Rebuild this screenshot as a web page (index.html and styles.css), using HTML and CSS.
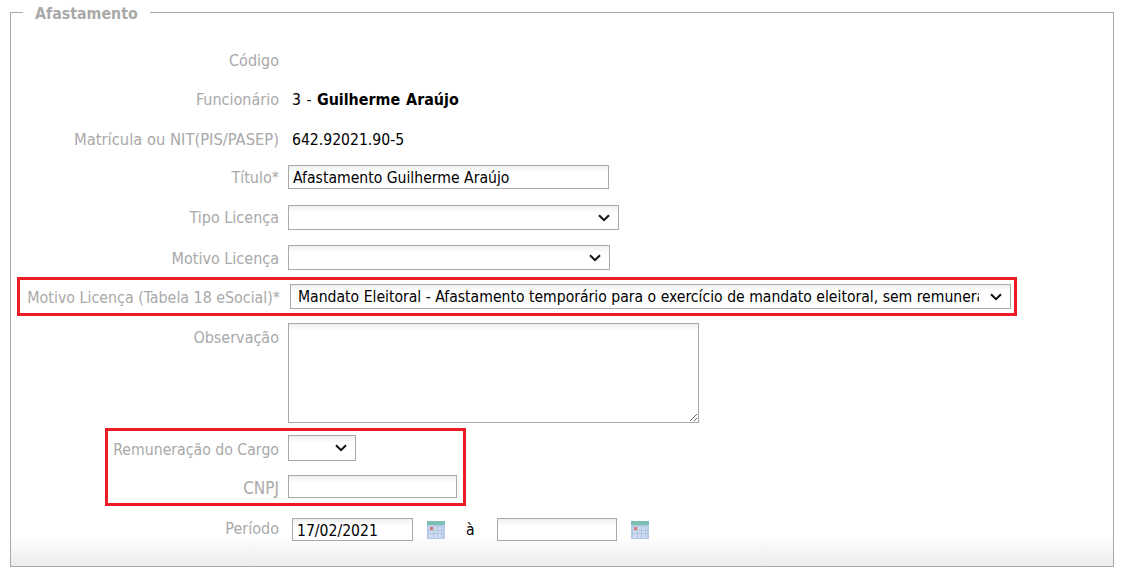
FILE: index.html
```html
<!DOCTYPE html>
<html lang="pt-BR">
<head>
    <meta charset="UTF-8">
    <meta name="viewport" content="width=device-width, initial-scale=1.0">
    <title>Afastamento</title>
    <link rel="stylesheet" href="styles.css">
</head>
<body>
    <fieldset class="panel">
        <legend>Afastamento</legend>

        <div class="row row-codigo">
            <label>Código</label>
        </div>
        <div class="row row-funcionario">
            <label>Funcionário</label>
            <span class="value">3 - <b>Guilherme Araújo</b></span>
        </div>
        <div class="row row-matricula">
            <label>Matrícula ou NIT(PIS/PASEP)</label>
            <span class="value">642.92021.90-5</span>
        </div>
        <div class="row row-titulo">
            <label>Título*</label>
            <input type="text" class="input-titulo" value="Afastamento Guilherme Araújo">
        </div>
        <div class="row row-tipo">
            <label>Tipo Licença</label>
            <select class="select-tipo"><option></option></select>
        </div>
        <div class="row row-motivo">
            <label>Motivo Licença</label>
            <select class="select-motivo"><option></option></select>
        </div>

        <div class="highlight highlight-esocial">
            <label>Motivo Licença (Tabela 18 eSocial)*</label>
            <select class="select-esocial">
                <option>Mandato Eleitoral - Afastamento temporário para o exercício de mandato eleitoral, sem remuneração</option>
            </select>
        </div>

        <div class="row row-obs">
            <label>Observação</label>
            <textarea></textarea>
        </div>

        <div class="highlight highlight-cargo">
            <div class="row row-remuneracao">
                <label>Remuneração do Cargo</label>
                <select class="select-remuneracao"><option></option></select>
            </div>
            <div class="row row-cnpj">
                <label>CNPJ</label>
                <input type="text" class="input-cnpj">
            </div>
        </div>

        <div class="row row-periodo">
            <label>Período</label>
            <input type="text" class="input-data input-inicio" value="17/02/2021">
            <svg class="cal" viewBox="0 0 18 18" width="18" height="18">
                <rect width="18" height="18" fill="#b4cbe8"/>
                <rect width="18" height="4" fill="#7cc0b4"/>
                <rect x="2" y="6" width="14" height="11" fill="#cfdcf0"/>
                <path d="M2 9.5h14M2 12.5h14M6.500 6v11M10.500 6v11M14.500 6v11" stroke="#b4c6e2" stroke-width="1" fill="none"/>
                <rect x="3" y="6" width="3" height="3" fill="#e07a76"/>
            </svg>
            <span class="ate">à</span>
            <input type="text" class="input-data">
            <svg class="cal" viewBox="0 0 18 18" width="18" height="18">
                <rect width="18" height="18" fill="#b4cbe8"/>
                <rect width="18" height="4" fill="#7cc0b4"/>
                <rect x="2" y="6" width="14" height="11" fill="#cfdcf0"/>
                <path d="M2 9.5h14M2 12.5h14M6.500 6v11M10.500 6v11M14.500 6v11" stroke="#b4c6e2" stroke-width="1" fill="none"/>
                <rect x="3" y="6" width="3" height="3" fill="#e07a76"/>
            </svg>
        </div>
    </fieldset>
</body>
</html>
```

FILE: styles.css
```css
* {
    box-sizing: border-box;
}

html, body {
    height: 100%;
}

body {
    margin: 0;
    padding: 2px 8px 12px 10px;
    background-color: #fff;
    color: #000;
    font-family: 'DejaVu Sans', sans-serif;
    font-stretch: condensed;
    font-size: 15.6px;
    overflow: hidden;
}

.panel {
    margin: 0;
    padding: 0;
    height: 565px;
    border: 1px solid #a9a9a9;
    background: linear-gradient(#fff, #ececec) no-repeat bottom / 100% 31px;
}

legend {
    margin-left: 12px;
    padding: 2px 12px 0;
    color: #a9a9a9;
    font-size: 15.8px;
    font-weight: bold;
    line-height: 19px;
}

.row {
    display: flex;
    align-items: center;
    height: 24px;
    margin-bottom: 15px;
}

label {
    flex: none;
    width: 268px;
    margin-right: 9px;
    color: #a9a9a9;
    font-size: 16px;
    text-align: right;
}

input,
select,
textarea {
    flex: none;
    margin: 0;
    border: 1px solid #a9a9a9;
    border-radius: 0;
    background: linear-gradient(#eef0ef, #fff 7px);
    color: #000;
    font: inherit;
    font-stretch: condensed;
    outline: none;
}

input {
    padding: 2px 4px 0;
}

select {
    appearance: none;
    height: 25px;
    padding: 0 31px 0 7px;
    background:
        url("data:image/svg+xml,%3Csvg xmlns='http://www.w3.org/2000/svg' width='12' height='8'%3E%3Cpath d='M1 1.200l5 5 5-5' fill='none' stroke='%23111' stroke-width='2'/%3E%3C/svg%3E") no-repeat right 8px center,
        linear-gradient(#eef0ef, #fff 7px);
}

.value {
    margin-left: 4px;
}

.row-funcionario .value {
    word-spacing: 1px;
}

.row-funcionario b {
    font-size: 15.9px;
}

.row-matricula .value {
    padding-top: 2px;
}

.row-matricula label {
    font-size: 16.4px;
}

.row-codigo {
    margin-top: 25px;
}

.row-funcionario {
    margin-bottom: 16px;
}

.row-matricula {
    margin-bottom: 14px;
}

.row-titulo {
    margin-bottom: 16px;
}

.row-tipo,
.row-motivo {
    height: 25px;
}

.row-motivo {
    margin-bottom: 7px;
}

.row-motivo label,
.highlight label {
    padding-top: 2px;
}

.input-titulo {
    width: 321px;
    height: 24px;
}

.select-tipo {
    width: 331px;
}

.select-motivo {
    width: 322px;
}

.highlight {
    border: 3px solid #ed1c24;
}

.highlight-esocial {
    display: flex;
    align-items: center;
    width: 1000px;
    height: 39px;
    margin: 0 0 7px 6px;
}

.highlight-esocial label {
    width: 260px;
    margin-right: 10px;
    font-size: 15.85px;
}

.select-esocial {
    width: 721px;
}

.row-obs {
    align-items: flex-start;
    height: 100px;
    margin-bottom: 5px;
}

.row-obs label {
    margin-top: 5px;
}

textarea {
    width: 411px;
    height: 100px;
}

.highlight-cargo {
    width: 361px;
    height: 78px;
    margin: 0 0 12px 94px;
    padding-top: 4px;
}

.highlight-cargo label {
    width: 171px;
    font-size: 15.7px;
}

.row-remuneracao {
    height: 26px;
    margin-bottom: 14px;
}

.select-remuneracao {
    width: 68px;
    height: 26px;
}

.row-cnpj {
    height: 23px;
    margin-bottom: 0;
}

.highlight-cargo .row-cnpj label {
    font-size: 17px;
}

.input-cnpj {
    width: 169px;
    height: 23px;
}

.row-periodo {
    height: 23px;
    margin-bottom: 0;
}

.row-periodo label {
    margin-top: -3px;
    margin-right: 13px;
}

.input-data {
    width: 120px;
    height: 23px;
}

.input-inicio {
    width: 121px;
}

.cal {
    flex: none;
    margin-left: 14px;
}

.ate {
    width: 52px;
    padding-left: 21px;
}
```
